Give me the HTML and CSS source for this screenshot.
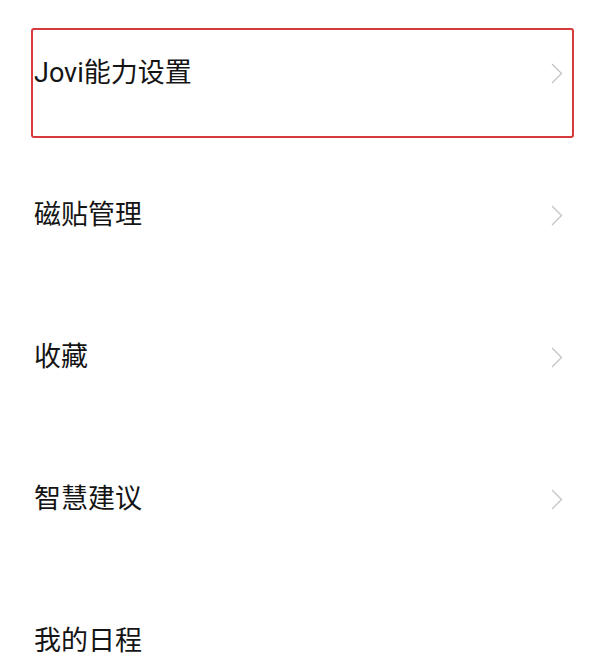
FILE: index.html
```html
<!DOCTYPE html>
<html lang="zh-CN">
<head>
<meta charset="utf-8">
<title>设置</title>
<link rel="stylesheet" href="styles.css">
</head>
<body>
<ul class="list">
  <li class="row row-highlight">
    <span class="label">Jovi能力设置</span>
    <svg class="chev" width="12" height="21" viewBox="0 0 12 21"><path d="M1 1 L10.5 10.5 L1 20" fill="none" stroke="#c3c6c8" stroke-width="1.4"/></svg>
  </li>
  <li class="row">
    <span class="label">磁贴管理</span>
    <svg class="chev" width="12" height="21" viewBox="0 0 12 21"><path d="M1 1 L10.5 10.5 L1 20" fill="none" stroke="#c3c6c8" stroke-width="1.4"/></svg>
  </li>
  <li class="row">
    <span class="label">收藏</span>
    <svg class="chev" width="12" height="21" viewBox="0 0 12 21"><path d="M1 1 L10.5 10.5 L1 20" fill="none" stroke="#c3c6c8" stroke-width="1.4"/></svg>
  </li>
  <li class="row">
    <span class="label">智慧建议</span>
    <svg class="chev" width="12" height="21" viewBox="0 0 12 21"><path d="M1 1 L10.5 10.5 L1 20" fill="none" stroke="#c3c6c8" stroke-width="1.4"/></svg>
  </li>
  <li class="row row-last">
    <span class="label">我的日程</span>
  </li>
</ul>
</body>
</html>
```
FILE: styles.css
```css
html, body {
  margin: 0;
  padding: 0;
  background: #ffffff;
}
body {
  font-family: Roboto, "Noto Sans CJK SC", sans-serif;
  color: #141414;
}
.list {
  list-style: none;
  margin: 0;
  padding: 28px 24px 0 31px;
}
.row {
  box-sizing: border-box;
  height: 110px;
  margin-bottom: 32px;
  border: 2px solid transparent;
  border-radius: 3px;
  padding: 26px 9px 0 1px;
  display: flex;
  align-items: flex-start;
  justify-content: space-between;
}
.row-highlight {
  border-color: #d63a3a;
}
.row-last {
  height: 72px;
  margin-bottom: 0;
}
.label {
  font-size: 27px;
  line-height: 34px;
  height: 34px;
}
.chev {
  margin-top: 7px;
  display: block;
}
```
